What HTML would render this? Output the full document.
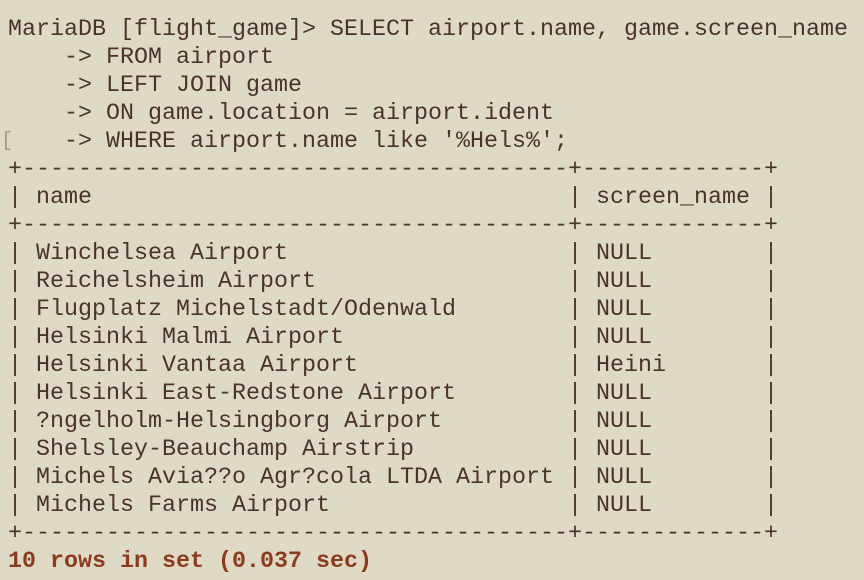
<!DOCTYPE html>
<html><head><meta charset="utf-8"><style>
html,body{margin:0;padding:0;}
body{width:864px;height:580px;background:#dfdac5;overflow:hidden;position:relative;}
pre{position:absolute;left:8px;top:16px;margin:0;font-family:"Liberation Mono","Courier New",monospace;font-size:23.33px;line-height:28px;color:#4a332f;}
.b{color:#8c3b1f;font-weight:bold;}
.br{position:absolute;left:1px;top:128px;font-family:"Liberation Mono",monospace;font-size:20px;line-height:28px;color:#9a9a90;}
</style></head><body>
<div class="br">[</div>
<pre>MariaDB [flight_game]&gt; SELECT airport.name, game.screen_name
    -&gt; FROM airport
    -&gt; LEFT JOIN game
    -&gt; ON game.location = airport.ident
    -&gt; WHERE airport.name like '%Hels%';
+---------------------------------------+-------------+
| name                                  | screen_name |
+---------------------------------------+-------------+
| Winchelsea Airport                    | NULL        |
| Reichelsheim Airport                  | NULL        |
| Flugplatz Michelstadt/Odenwald        | NULL        |
| Helsinki Malmi Airport                | NULL        |
| Helsinki Vantaa Airport               | Heini       |
| Helsinki East-Redstone Airport        | NULL        |
| ?ngelholm-Helsingborg Airport         | NULL        |
| Shelsley-Beauchamp Airstrip           | NULL        |
| Michels Avia??o Agr?cola LTDA Airport | NULL        |
| Michels Farms Airport                 | NULL        |
+---------------------------------------+-------------+
<span class="b">10 rows in set (0.037 sec)</span></pre>
</body></html>
